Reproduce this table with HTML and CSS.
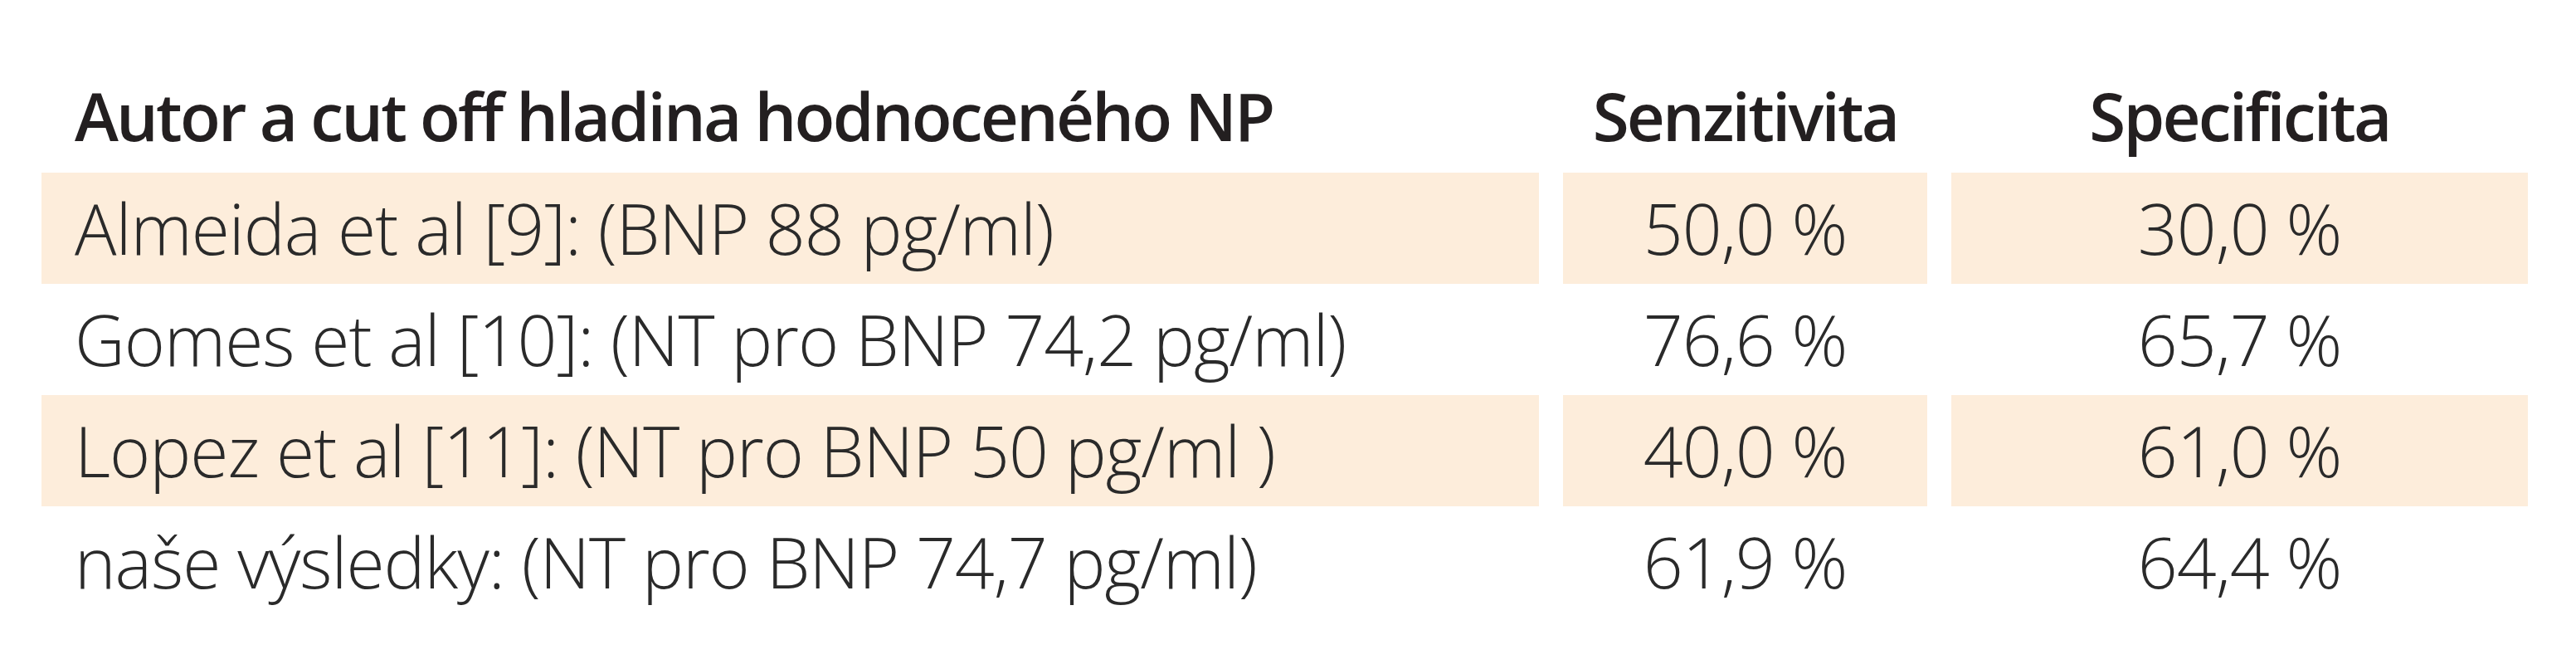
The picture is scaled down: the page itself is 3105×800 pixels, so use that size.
FILE: index.html
```html
<!DOCTYPE html>
<html lang="cs">
<head>
<meta charset="utf-8">
<title>Tabulka</title>
<link rel="stylesheet" href="styles.css">
</head>
<body>
<div class="table">
  <div class="cell head first"><span>Autor a cut off hladina hodnoceného NP</span></div>
  <div class="cell head num"><span>Senzitivita</span></div>
  <div class="cell head num"><span>Specificita</span></div>

  <div class="cell first shade"><span>Almeida et al [9]: (BNP 88 pg/ml)</span></div>
  <div class="cell num shade"><span>50,0 %</span></div>
  <div class="cell num shade"><span>30,0 %</span></div>

  <div class="cell first"><span>Gomes et al [10]: (NT pro BNP 74,2 pg/ml)</span></div>
  <div class="cell num"><span>76,6 %</span></div>
  <div class="cell num"><span>65,7 %</span></div>

  <div class="cell first shade"><span>Lopez et al [11]: (NT pro BNP 50 pg/ml )</span></div>
  <div class="cell num shade"><span>40,0 %</span></div>
  <div class="cell num shade"><span>61,0 %</span></div>

  <div class="cell first"><span>naše výsledky: (NT pro BNP 74,7 pg/ml)</span></div>
  <div class="cell num"><span>61,9 %</span></div>
  <div class="cell num"><span>64,4 %</span></div>
</div>
</body>
</html>
```
FILE: styles.css
```css
html, body {
  margin: 0;
  padding: 0;
  background: #ffffff;
}
body {
  font-family: "Open Sans", "Noto Sans", sans-serif;
  color: #2a2a2a;
}
.table {
  display: grid;
  grid-template-columns: 1805px 439px 695px;
  grid-template-rows: 136px;
  grid-auto-rows: 134px;
  column-gap: 29px;
  margin: 72px 0 0 50px;
}
.cell {
  font-size: 84px;
  line-height: 134px;
  font-weight: 300;
  letter-spacing: -1px;
  white-space: nowrap;
}
.cell.head {
  line-height: 134px;
  padding-bottom: 2px;
  font-size: 80px;
  font-weight: 600;
  letter-spacing: -2.8px;
  color: #231f20;
}
.first {
  padding-left: 40px;
}
.num {
  text-align: center;
}
.shade {
  background: #fdeddb;
}
```
